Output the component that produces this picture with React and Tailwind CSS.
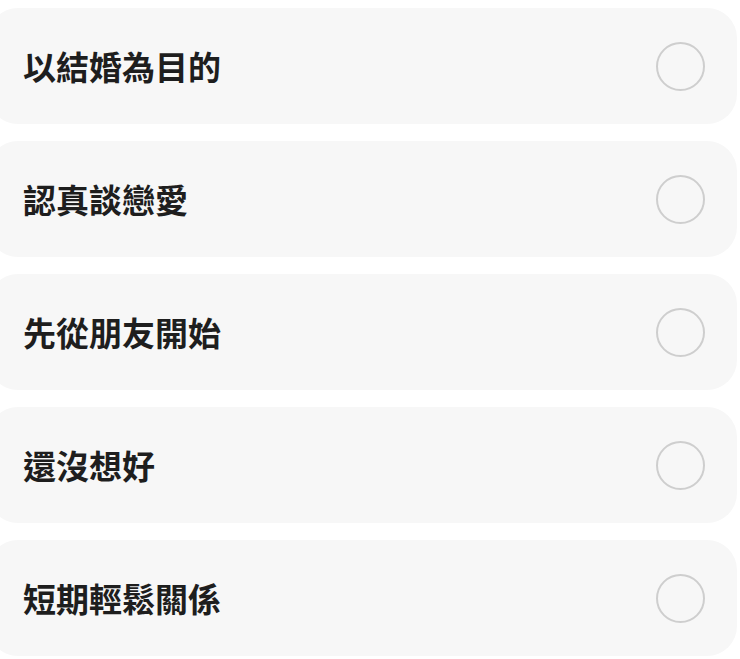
const options = ["以結婚為目的", "認真談戀愛", "先從朋友開始", "還沒想好", "短期輕鬆關係"];

export default function App() {
  return (
    <div className="w-[740px] h-[659px] bg-white overflow-hidden pt-[8px]">
      <div className="flex flex-col gap-[17px] ml-[-12px] mr-[3px]">
        {options.map((label) => (
          <div
            key={label}
            className="h-[116px] rounded-[30px] bg-[#f7f7f7] flex items-center justify-between pl-[35px] pr-[32px]"
          >
            <span
              className="text-[33px] font-semibold text-[#1e1e1e] leading-none"
              style={{ fontFamily: '"Noto Sans CJK TC", "Noto Sans", sans-serif' }}
            >
              {label}
            </span>
            <div className="h-[49px] w-[49px] rounded-full border-[2.5px] border-[#cecece]" />
          </div>
        ))}
      </div>
    </div>
  );
}
